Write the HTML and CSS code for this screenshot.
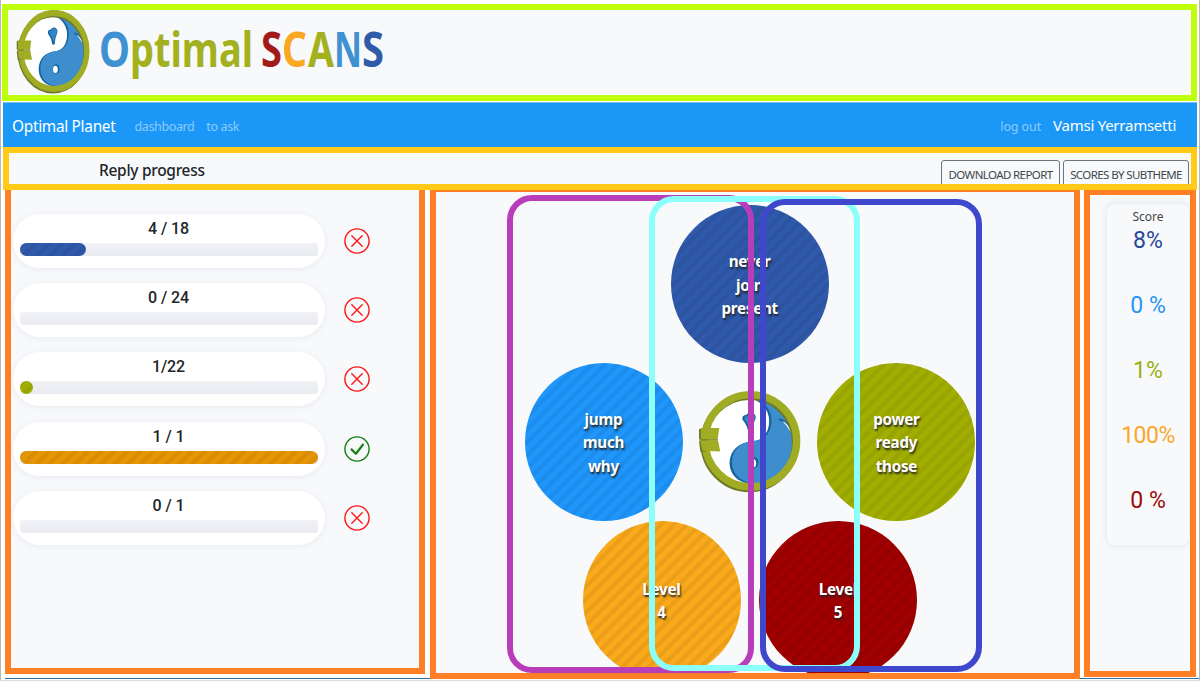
FILE: index.html
```html
<!DOCTYPE html>
<html lang="en">
<head>
<meta charset="utf-8">
<title>Optimal Scans</title>
<link rel="stylesheet" href="styles.css">
</head>
<body>
<svg class="defs" width="0" height="0">
  <symbol id="emblem" viewBox="38 30 310 308" preserveAspectRatio="none">
    <ellipse cx="196" cy="183" rx="132" ry="134" fill="#fff"/>
    <path d="M235 55C300 75 336 130 329 212L318 170Q305 105 235 55Z" fill="#6d7420"/>
    <path d="M202 56C238 60 268 82 283 105Q299 108 305 137Q319 162 319 210C313 272 267 318 198 311C153 307 132 276 133 246C135 212 158 187 201 184C243 180 256 144 251 110Q243 72 202 56Z" fill="#15639f"/>
    <path d="M209 54C245 58 275 80 290 103Q306 106 312 135Q326 160 326 208C320 270 274 316 205 309C160 305 139 274 140 244C142 210 165 185 208 182C250 178 263 142 258 108Q250 70 209 54Z" fill="#3e8ecd"/>
    <path d="M281 115Q309 118 315 145Q300 127 281 120Z" fill="#15639f"/>
    <path d="M292 123Q310 130 318 157Q306 137 292 123Z" fill="#fff"/>
    <ellipse cx="206" cy="247" rx="14" ry="17" fill="#15639f"/>
    <ellipse cx="203" cy="249" rx="10" ry="13" fill="#fff"/>
    <path d="M172 119Q169 105 184 104Q190 94 203 98Q216 106 210 119Q201 134 200 159H190Q187 136 172 119Z" fill="#15639f"/>
    <path d="M178 118Q176 108 187 108Q193 97 203 101Q215 108 207 119Q198 133 197 156Q193 135 178 118Z" fill="#3284c4"/>
    <ellipse cx="193" cy="188" rx="138" ry="138" fill="none" stroke="#6d7828" stroke-width="20"/>
    <ellipse cx="197" cy="182" rx="138" ry="138" fill="none" stroke="#a0ad24" stroke-width="22"/>
    <path d="M41 147L52 143V178H41ZM41 182L55 180L61 215H45Z" fill="#6d7828"/>
    <path d="M47 144H102L97 178H46ZM45 180H98L105 214L51 212Z" fill="#a0ad24"/>
    <path d="M46 179H98" stroke="#6d7828" stroke-width="3"/>
  </symbol>
  <symbol id="cross" viewBox="0 0 26 26">
    <circle cx="13" cy="13" r="12.1"/><path d="M7.8 7.8l10.4 10.4M18.2 7.8L7.8 18.2"/>
  </symbol>
  <symbol id="check" viewBox="0 0 26 26">
    <circle cx="13" cy="13" r="12.1"/><path d="M7.5 13.4l4.4 4.3 7-9" stroke-width="2.2"/>
  </symbol>
</svg>
<div class="page">
  <header class="brand">
    <svg class="brand-mark"><use href="#emblem"/></svg>
    <svg class="brand-name" width="290" height="80" viewBox="0 0 290 80">
      <text y="57"><tspan x="-1" textLength="31" lengthAdjust="spacingAndGlyphs" fill="#3e92d1">O</tspan><tspan x="30" textLength="123" lengthAdjust="spacingAndGlyphs" fill="#a3b11f">ptimal</tspan><tspan x="161" textLength="21" lengthAdjust="spacingAndGlyphs" fill="#a31a1a">S</tspan><tspan x="182" textLength="25" lengthAdjust="spacingAndGlyphs" fill="#faa722">C</tspan><tspan x="208" textLength="26" lengthAdjust="spacingAndGlyphs" fill="#a3b11f">A</tspan><tspan x="234" textLength="28" lengthAdjust="spacingAndGlyphs" fill="#3e92d1">N</tspan><tspan x="262" textLength="22" lengthAdjust="spacingAndGlyphs" fill="#2e5ca8">S</tspan></text>
    </svg>
  </header>
  <nav class="nav">
    <span class="nav-title">Optimal Planet</span>
    <span class="nav-link">dashboard</span>
    <span class="nav-link">to ask</span>
    <span class="nav-link logout">log out</span>
    <span class="nav-user">Vamsi Yerramsetti</span>
  </nav>
  <div class="toolbar">
    <h1>Reply progress</h1>
    <div class="actions"><span class="btn dl">DOWNLOAD REPORT</span><span class="btn sub">SCORES BY SUBTHEME</span></div>
  </div>
  <main class="columns">
    <section class="panel progress">
      <div class="row"><div class="pill"><b>4 / 18</b><div class="track"><i class="fill navy" style="width:22%"></i></div></div><svg class="state bad"><use href="#cross"/></svg></div>
      <div class="row"><div class="pill"><b>0 / 24</b><div class="track"></div></div><svg class="state bad"><use href="#cross"/></svg></div>
      <div class="row"><div class="pill"><b>1/22</b><div class="track"><i class="fill olive" style="width:4.2%"></i></div></div><svg class="state bad"><use href="#cross"/></svg></div>
      <div class="row"><div class="pill"><b>1 / 1</b><div class="track"><i class="fill amber" style="width:100%"></i></div></div><svg class="state good"><use href="#check"/></svg></div>
      <div class="row"><div class="pill"><b>0 / 1</b><div class="track"></div></div><svg class="state bad"><use href="#cross"/></svg></div>
    </section>
    <section class="panel wheel">
      <div class="disc navy d1">never<br>join<br>present</div>
      <div class="disc sky d2">jump<br>much<br>why</div>
      <div class="disc olive d3">power<br>ready<br>those</div>
      <div class="disc orange d4">Level<br>4</div>
      <div class="disc red d5">Level<br>5</div>
      <svg class="hub"><use href="#emblem"/></svg>
      <div class="frame f1"></div>
      <div class="frame f2"></div>
      <div class="frame f3"></div>
    </section>
    <section class="panel scores">
      <div class="score-card">
        <small>Score</small>
        <span class="c-navy">8%</span><span class="c-sky">0 %</span><span class="c-olive">1%</span><span class="c-orange">100%</span><span class="c-red">0 %</span>
      </div>
    </section>
  </main>
</div>
</body>
</html>
```
FILE: styles.css
```css
* { box-sizing: border-box; }
body { margin: 0; background: #fff; font-family: "Noto Sans", "Open Sans", sans-serif; color: #212529; }
.defs { position: absolute; }
.page { width: 1200px; height: 681px; overflow: hidden; border-left: 1px solid #b8b8b8; border-right: 1px solid #b8b8b8; border-bottom: 1px solid #dcdcdc; }
.brand { display: flex; margin: 4px 2px 0 1px; height: 97px; border: 6px solid #c0ff0c; background: #f8f9fb; overflow: hidden; }
.brand-mark { width: 74px; height: 85px; margin: -1px 0 0 8px; flex: none; }
.brand-name { margin-left: 10px; font: 700 49px "Noto Sans", sans-serif; }
.nav { display: flex; align-items: center; height: 45px; margin: 1px 2px 0; padding: 2px 21px 0 9px; background: #1b98f7; border-top: 1px solid #7fbdf0; color: #fff; }
.nav-title { font-size: 15.4px; letter-spacing: -.3px; width: 122.5px; white-space: nowrap; }
.nav-link { font-size: 12.5px; letter-spacing: -.38px; color: #8dcbfb; margin-right: 12px; }
.logout { margin-left: auto; letter-spacing: -.1px; }
.nav-user { font-size: 15px; letter-spacing: -.25px; margin-top: -2px; }
.toolbar { position: relative; z-index: 2; display: flex; justify-content: space-between; height: 43px; margin: 0 2px; border: 6px solid #ffca18; background: #f8f9fb; overflow: hidden; }
.toolbar h1 { margin: 6px 0 0 90px; font-size: 15.5px; letter-spacing: -.3px; line-height: 22px; font-weight: 500; }
.actions { display: flex; gap: 3px; padding: 7px 2px 0 0; }
.btn { height: 34px; border: 1px solid #6c757d; border-radius: 3px; font-size: 11.5px; letter-spacing: -.6px; line-height: 27px; text-align: center; color: #40464c; white-space: nowrap; }
.dl { width: 119px; }
.sub { width: 126px; }
.columns { display: grid; grid-template-columns: 420px 650px 111px; column-gap: 5px; margin-left: 4px; height: 489px; align-items: start; border-bottom: 1px solid #2c6c9f; }
.panel { border: 6px solid #ff7f27; background: #f8f9fb; }
.progress { height: 490px; margin-top: -6px; padding: 23.5px 0 0 2px; }
.row { display: flex; align-items: center; height: 54px; margin-bottom: 15.4px; }
.pill { width: 312px; height: 54px; padding: 5px 7px 0; border-radius: 27px; background: #fff; box-shadow: 0 1px 6px rgba(60,80,120,.09); text-align: center; }
.pill b { display: block; height: 24px; margin-left: -1px; font: 500 16px/20px Roboto, sans-serif; letter-spacing: -.1px; }
.track { height: 13px; border-radius: 3px; background: linear-gradient(#f1f2f6, #e9ebf1); }
.fill { display: block; height: 13px; border-radius: 7px; }
.navy, .sky, .olive, .orange, .amber, .red { background-image: linear-gradient(135deg, rgba(0,0,0,.06) 25%, transparent 25%, transparent 50%, rgba(0,0,0,.06) 50%, rgba(0,0,0,.06) 75%, transparent 75%); background-size: 13px 13px; }
.navy { background-color: #2f59ab; }
.sky { background-color: #1e96fb; }
.olive { background-color: #a1ae00; }
.orange { background-color: #faa91a; }
.amber { background-color: #e69605; }
.red { background-color: #a00000; }
.state { width: 26px; height: 26px; margin-left: 18.5px; fill: none; stroke-width: 1.4; stroke-linecap: round; stroke-linejoin: round; }
.bad { stroke: #fb1616; }
.good { stroke: #118011; }
.wheel { position: relative; height: 493px; margin-top: -4px; overflow: hidden; }
.disc { position: absolute; width: 158px; height: 158px; padding-top: 3px; border-radius: 50%; display: flex; align-items: center; justify-content: center; color: #fff; font-size: 15.2px; letter-spacing: -.25px; line-height: 23.5px; font-weight: 700; text-align: center; text-shadow: 1px 2px 2px #222; }
.d1 { left: 234.7px; top: 13px; }
.d2 { left: 88.5px; top: 170.7px; }
.d3 { left: 381.4px; top: 170.7px; }
.d4 { left: 146.5px; top: 328.5px; }
.d5 { left: 323px; top: 328.5px; }
.hub { position: absolute; left: 261.5px; top: 197.5px; width: 103px; height: 103px; }
.frame { position: absolute; border: 6px solid; border-radius: 25px; }
.f1 { left: 71px; top: 2.5px; width: 247px; height: 478.5px; border-color: #b83dba; }
.f2 { left: 213px; top: 4px; width: 211px; height: 475px; border-color: #8cfffb; }
.f3 { left: 324px; top: 7px; width: 222px; height: 473px; border-color: #3f48cc; }
.scores { height: 488px; margin-top: -1px; margin-left: -1px; padding: 9px 0 0 17px; overflow: hidden; }
.score-card { display: flex; flex-direction: column; width: 82px; height: 341px; border-radius: 8px; box-shadow: 0 0 7px rgba(60,80,120,.13); text-align: center; }
.score-card small { height: 4px; font-size: 12px; line-height: 25px; color: #444; }
.score-card span { height: 65.1px; font: 23px/65px Roboto, sans-serif; }
.c-navy { color: #26479a; }
.c-sky { color: #2496f8; }
.c-olive { color: #9caf13; }
.score-card .c-orange { color: #faa72a; letter-spacing: -.5px; }
.c-orange { color: #faa72a; }
.c-red { color: #9d0808; }
```
